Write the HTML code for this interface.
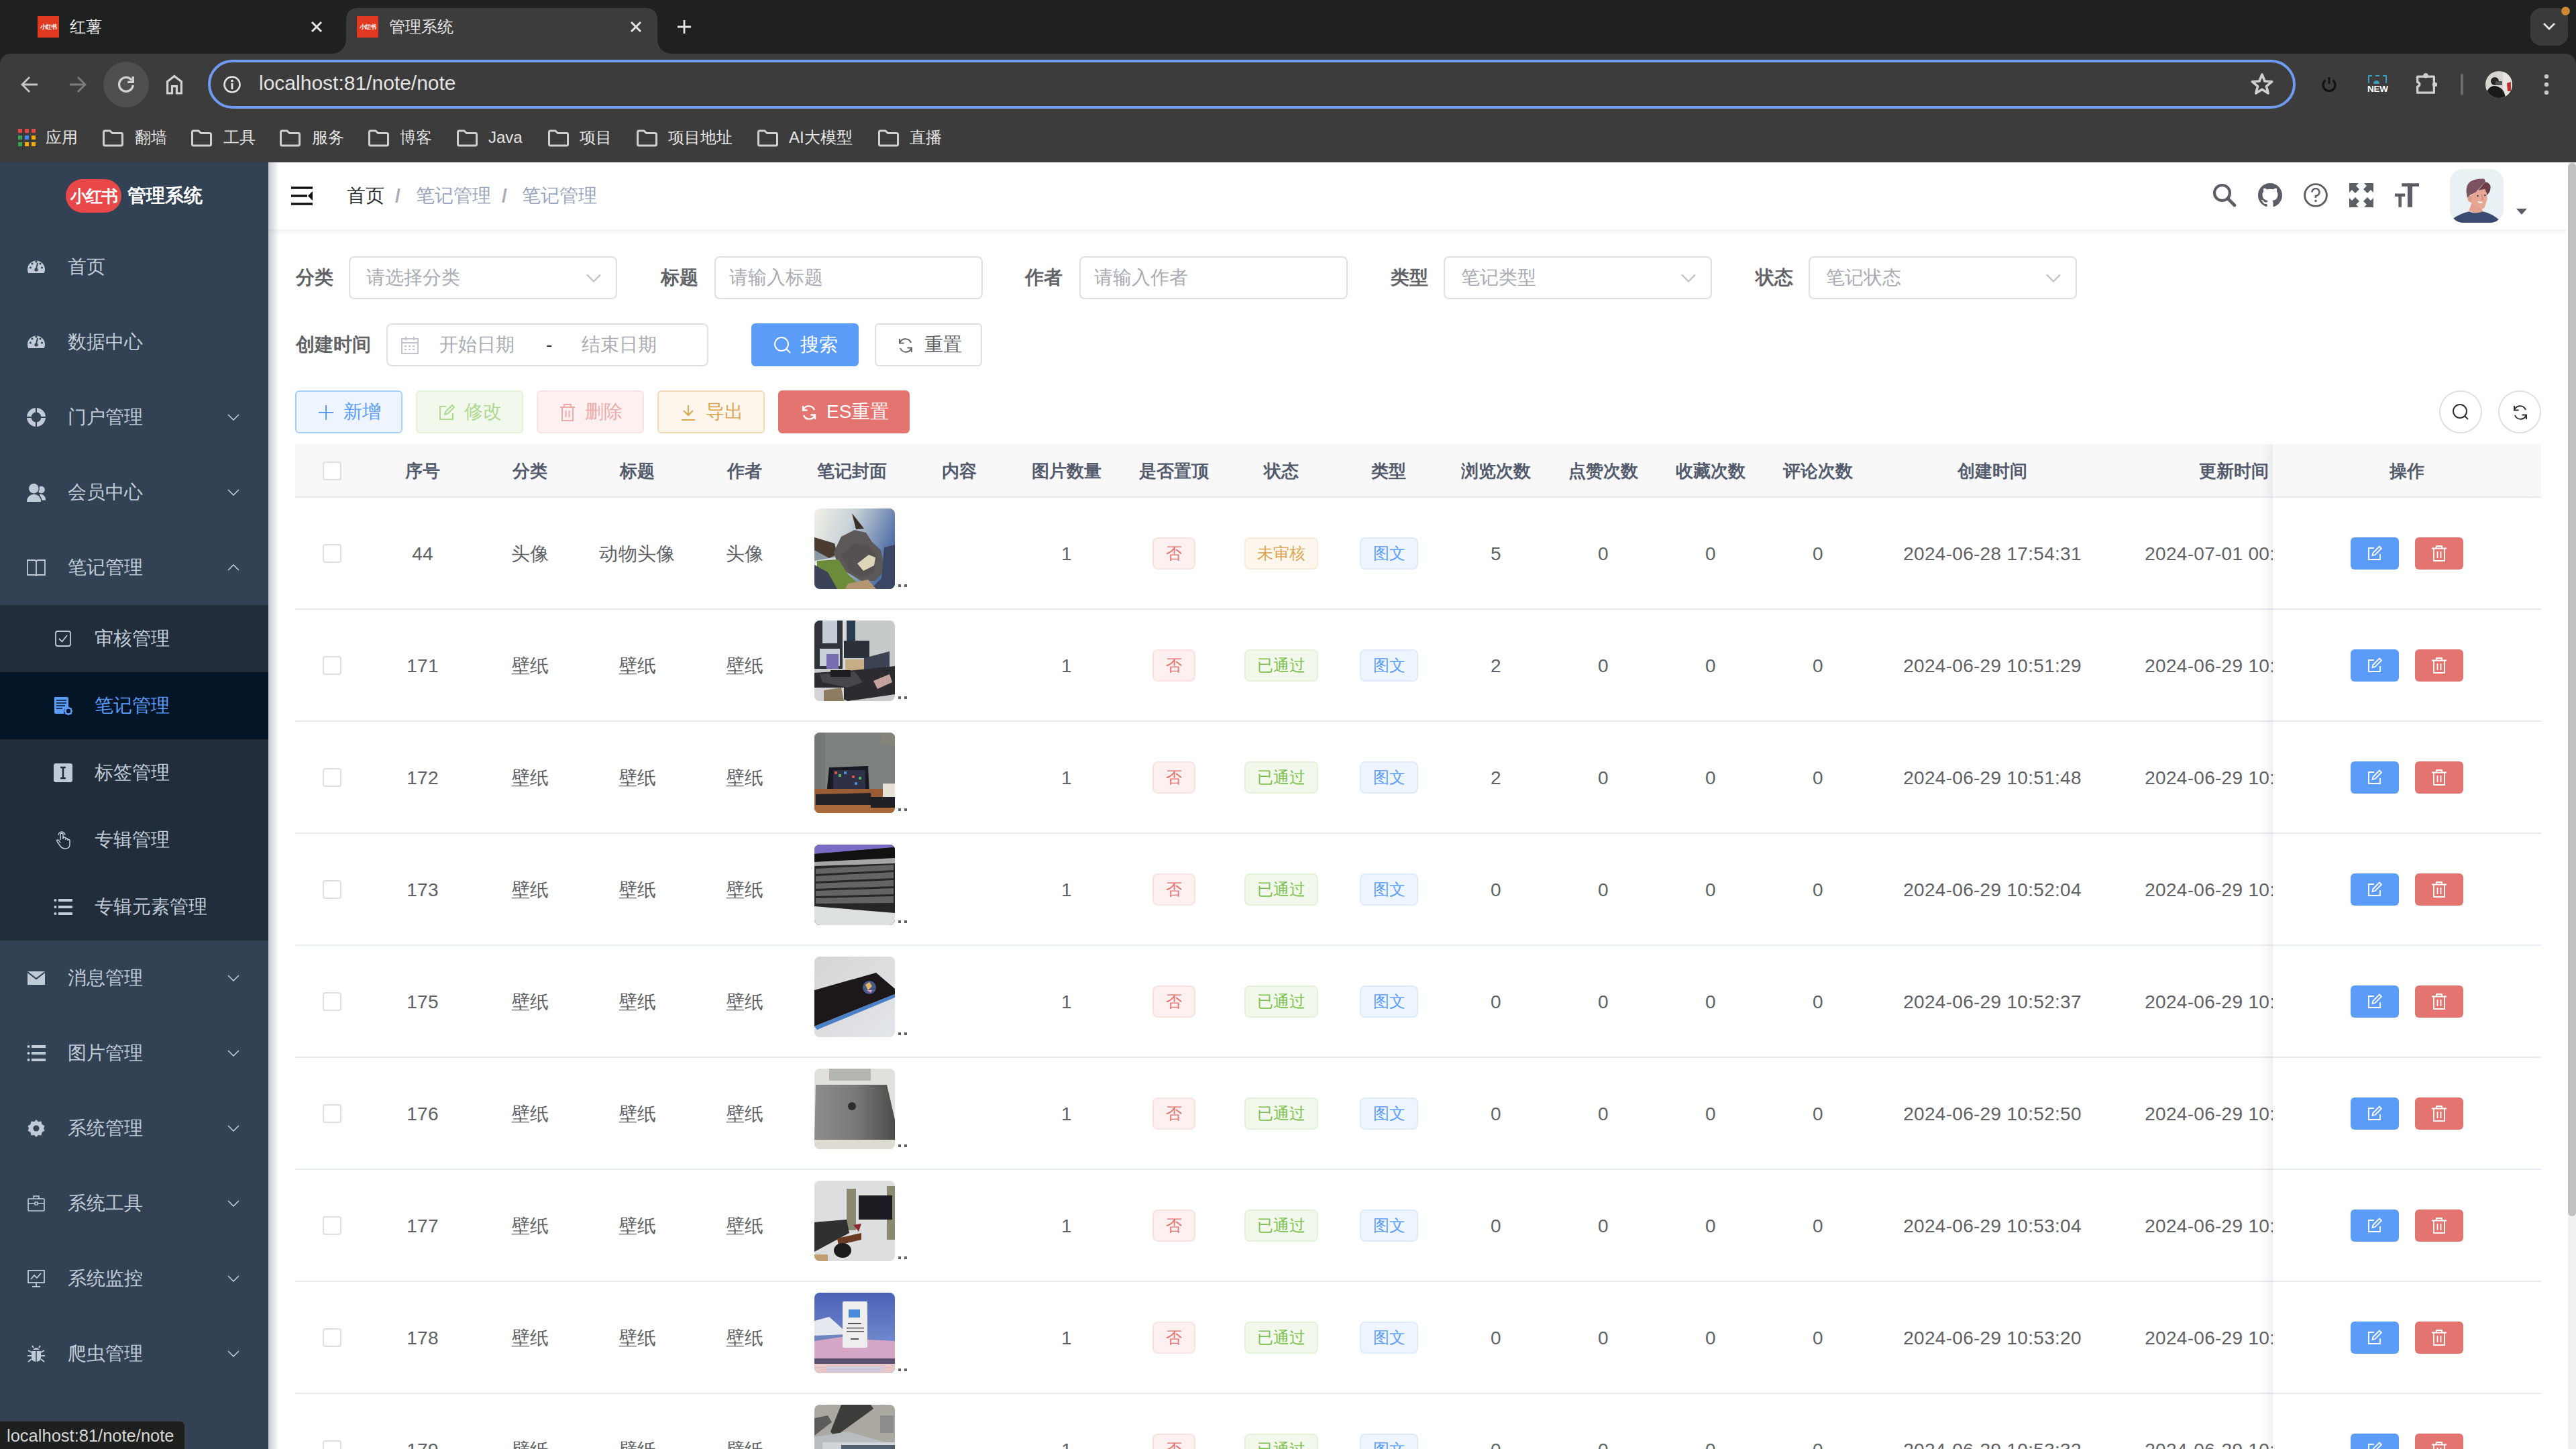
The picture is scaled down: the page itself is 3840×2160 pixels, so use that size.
<!DOCTYPE html>
<html><head><meta charset="utf-8">
<style>
*{box-sizing:border-box;margin:0;padding:0}
html,body{width:3840px;height:2160px;overflow:hidden;background:#fff;font-family:"Liberation Sans",sans-serif}
.a{position:absolute}
svg{display:block}
/* chrome */
#frame{left:0;top:0;width:3840px;height:110px;background:#1f2020}
#toolbar{left:0;top:80px;width:3840px;height:162px;background:#3c3c3c;border-radius:15px 16px 0 0}
.tabtitle{color:#e3e3e3;font-size:24px;line-height:32px;white-space:nowrap}
.bm{color:#e3e3e3;font-size:24px;line-height:32px;white-space:nowrap;top:189px}
/* sidebar */
#side{left:0;top:242px;width:400px;height:1918px;background:#334154;overflow:hidden}
.mi{left:0;width:400px;height:112px}
.mi .t{position:absolute;left:101px;top:0;line-height:112px;font-size:28px;color:#c1cbd8;white-space:nowrap}
.mi .ic{position:absolute;left:40px;top:42px;width:28px;height:28px}
.mi .ar{position:absolute;left:339px;top:51px;width:18px;height:10px}
.si{left:0;width:400px;height:100px;background:#222d3c}
.si .t{position:absolute;left:141px;top:0;line-height:100px;font-size:28px;color:#c1cbd8;white-space:nowrap}
.si .ic{position:absolute;left:80px;top:36px;width:28px;height:28px}

.lbl{font-size:28px;font-weight:bold;color:#606266;line-height:64px;white-space:nowrap}
.inp{height:64px;border:2px solid #dddfe5;border-radius:8px;background:#fff}
.ph{font-size:28px;color:#a9acb3;line-height:60px;white-space:nowrap;position:absolute;left:24px;top:0}
.btn{height:64px;border:2px solid;border-radius:6px;font-size:28px;line-height:60px;white-space:nowrap}
.btn svg{position:absolute}
.btn span{position:absolute;top:0}

.th{position:absolute;top:0;height:80px;line-height:80px;text-align:center;font-size:26px;font-weight:bold;color:#535a6c;white-space:nowrap}
.td{position:absolute;text-align:center;font-size:28px;color:#606266;white-space:nowrap;overflow:hidden;letter-spacing:0.3px}
.cb{position:absolute;width:28px;height:28px;border:2px solid #dddfe5;border-radius:4px;background:#fff}
.tag{position:absolute;height:48px;line-height:44px;border:2px solid;border-radius:8px;font-size:24px;text-align:center;white-space:nowrap}
.rline{position:absolute;left:0;height:2px;background:#e7eaf1}
.ell{position:absolute;font-size:28px;color:#606266;line-height:20px}
@media (max-width:2500px){html{zoom:0.5}}
</style></head>
<body>
<!-- ============ CHROME ============ -->
<div id="frame" class="a"></div>
<div id="toolbar" class="a"></div>

<!-- tab 1 inactive -->
<div class="a" style="left:56px;top:24px;width:32px;height:32px;background:#e0391f;color:#fff;font-size:9px;font-weight:bold;line-height:32px;text-align:center;letter-spacing:-1px;overflow:hidden">小红书</div>
<div class="a tabtitle" style="left:104px;top:24px">红薯</div>
<svg class="a" style="left:463px;top:31px" width="18" height="18" viewBox="0 0 18 18"><path d="M2 2L16 16M16 2L2 16" stroke="#e3e3e3" stroke-width="3"/></svg>
<!-- active tab -->
<svg class="a" style="left:492px;top:12px" width="512" height="68" viewBox="0 0 512 68"><path d="M0 68 Q24 68 24 44 L24 18 Q24 0 42 0 L470 0 Q488 0 488 18 L488 44 Q488 68 512 68 Z" fill="#3c3c3c"/></svg>
<div class="a" style="left:532px;top:24px;width:32px;height:32px;background:#e0391f;color:#fff;font-size:9px;font-weight:bold;line-height:32px;text-align:center;letter-spacing:-1px;overflow:hidden">小红书</div>
<div class="a tabtitle" style="left:580px;top:24px">管理系统</div>
<svg class="a" style="left:939px;top:31px" width="18" height="18" viewBox="0 0 18 18"><path d="M2 2L16 16M16 2L2 16" stroke="#e3e3e3" stroke-width="3"/></svg>
<svg class="a" style="left:1009px;top:29px" width="22" height="22" viewBox="0 0 22 22"><path d="M11 1V21M1 11H21" stroke="#e3e3e3" stroke-width="2.8"/></svg>
<!-- tab search -->
<div class="a" style="left:3772px;top:12px;width:56px;height:56px;border-radius:16px;background:#3a3a3a"></div>
<svg class="a" style="left:3790px;top:33px" width="20" height="12" viewBox="0 0 20 12"><path d="M2 2L10 10L18 2" stroke="#e3e3e3" stroke-width="2.8" fill="none"/></svg>
<div class="a" style="left:3818px;top:10px;width:13px;height:13px;border-radius:50%;background:#cd8a32"></div>

<!-- toolbar icons -->
<svg class="a" style="left:30px;top:112px" width="28" height="28" viewBox="0 0 28 28"><path d="M26 14H4M14 3L3 14L14 25" stroke="#c7c7c7" stroke-width="2.8" fill="none"/></svg>
<svg class="a" style="left:102px;top:112px" width="28" height="28" viewBox="0 0 28 28"><path d="M2 14H24M14 3L25 14L14 25" stroke="#7d7d7d" stroke-width="2.8" fill="none"/></svg>
<div class="a" style="left:154px;top:92px;width:68px;height:68px;border-radius:50%;background:#4f4f4f"></div>
<svg class="a" style="left:170px;top:108px" width="36" height="36" viewBox="0 0 36 36"><path d="M28.3 19A10.4 10.4 0 1 1 26.3 11.6" stroke="#d3d3d3" stroke-width="3.3" fill="none"/><path d="M20.2 14.4H28.25V6" stroke="#d3d3d3" stroke-width="3.3" fill="none"/></svg>
<svg class="a" style="left:240px;top:108px" width="40" height="36" viewBox="0 0 40 36"><path d="M9.6 31V13.5L19.8 5.5L30.4 13.5V31H23.4V20.6H16.5V31Z" stroke="#d3d3d3" stroke-width="3.2" fill="none" stroke-linejoin="miter"/></svg>
<!-- omnibox -->
<div class="a" style="left:310px;top:89px;width:3112px;height:73px;border:4px solid #6f9cf2;border-radius:37px;background:#3c3c3c"></div>
<svg class="a" style="left:332px;top:112px" width="28" height="28" viewBox="0 0 28 28"><circle cx="14" cy="14" r="11.5" stroke="#e3e3e3" stroke-width="2.6" fill="none"/><circle cx="14" cy="8.5" r="1.9" fill="#e3e3e3"/><path d="M14 12V21" stroke="#e3e3e3" stroke-width="3"/></svg>
<div class="a" style="left:386px;top:105px;font-size:30px;line-height:38px;color:#e3e3e3;white-space:nowrap">localhost:81/note/note</div>
<svg class="a" style="left:3350px;top:103px" width="44" height="44" viewBox="0 0 44 44"><path d="M22.00 8.00L26.00 18.00L36.74 18.71L28.47 25.60L31.11 36.04L22.00 30.30L12.89 36.04L15.53 25.60L7.26 18.71L18.00 18.00Z" stroke="#d0d0d0" stroke-width="3.6" fill="none" stroke-linejoin="round"/></svg>
<!-- extension icons -->
<svg class="a" style="left:3459px;top:113px" width="26" height="26" viewBox="0 0 26 26"><path d="M7.5 6.5A9 9 0 1 0 18.5 6.5" stroke="#111" stroke-width="3" fill="none"/><path d="M13 2V12" stroke="#111" stroke-width="3"/></svg>
<div class="a" style="left:3530px;top:112px;width:28px;height:12px;border:2px dashed #3a9bb5;border-bottom:none"></div><div class="a" style="left:3538px;top:120px;width:9px;height:5px;border-radius:5px 5px 0 0;background:#3a9bb5"></div>
<div class="a" style="left:3529px;top:125px;font-size:13.5px;font-weight:bold;color:#fff;line-height:16px;letter-spacing:-0.3px">NEW</div>
<svg class="a" style="left:3598px;top:104px" width="40" height="40" viewBox="0 0 40 40"><path d="M5.65 10.15H30.35V34.15H5.65V25A3.2 3.2 0 0 0 5.65 18.6Z" stroke="#d0d0d0" stroke-width="3.3" fill="none" stroke-linejoin="round"/><circle cx="18" cy="8.6" r="3.6" fill="#d0d0d0"/><circle cx="31.5" cy="22" r="3.6" fill="#d0d0d0"/></svg>
<div class="a" style="left:3668px;top:110px;width:4px;height:32px;background:#6b6b6b;border-radius:2px"></div>
<div class="a" style="left:3705px;top:106px;width:40px;height:40px;border-radius:50%;overflow:hidden;background:#d8d4cf"><svg width="40" height="40" viewBox="0 0 40 40"><rect x="26" y="0" width="14" height="40" fill="#e8e4e0"/><circle cx="14" cy="15" r="6" fill="#222"/><path d="M0 40Q2 22 14 22Q28 24 30 40Z" fill="#1a1a1a"/><rect x="15" y="15" width="10" height="6" fill="#555"/><path d="M32 18L38 16L38 30L33 30Z" fill="#c03030"/></svg></div>
<svg class="a" style="left:3790px;top:110px" width="12" height="32" viewBox="0 0 12 32"><circle cx="6" cy="4" r="3.2" fill="#c7c7c7"/><circle cx="6" cy="16" r="3.2" fill="#c7c7c7"/><circle cx="6" cy="28" r="3.2" fill="#c7c7c7"/></svg>

<!-- bookmarks -->
<svg class="a" style="left:27px;top:192px" width="26" height="26" viewBox="0 0 26 26">
<rect x="0" y="0" width="6" height="6" fill="#e8453c"/><rect x="10" y="0" width="6" height="6" fill="#e8453c"/><rect x="20" y="0" width="6" height="6" fill="#e8453c"/>
<rect x="0" y="10" width="6" height="6" fill="#34a853"/><rect x="10" y="10" width="6" height="6" fill="#4285f4"/><rect x="20" y="10" width="6" height="6" fill="#f9ab00"/>
<rect x="0" y="20" width="6" height="6" fill="#34a853"/><rect x="10" y="20" width="6" height="6" fill="#f9ab00"/><rect x="20" y="20" width="6" height="6" fill="#f9ab00"/></svg>
<div class="a bm" style="left:68px">应用</div>
<svg class="a" style="left:152px;top:193px" width="33" height="26" viewBox="0 0 33 26"><path d="M2.5 4Q2.5 2 4.5 2H12L15.5 5.5H28.5Q30.5 5.5 30.5 7.5V22Q30.5 24 28.5 24H4.5Q2.5 24 2.5 22Z" stroke="#d0d0d0" stroke-width="3" fill="none" stroke-linejoin="round"/></svg>
<div class="a bm" style="left:201px">翻墙</div>
<svg class="a" style="left:284px;top:193px" width="33" height="26" viewBox="0 0 33 26"><path d="M2.5 4Q2.5 2 4.5 2H12L15.5 5.5H28.5Q30.5 5.5 30.5 7.5V22Q30.5 24 28.5 24H4.5Q2.5 24 2.5 22Z" stroke="#d0d0d0" stroke-width="3" fill="none" stroke-linejoin="round"/></svg>
<div class="a bm" style="left:333px">工具</div>
<svg class="a" style="left:416px;top:193px" width="33" height="26" viewBox="0 0 33 26"><path d="M2.5 4Q2.5 2 4.5 2H12L15.5 5.5H28.5Q30.5 5.5 30.5 7.5V22Q30.5 24 28.5 24H4.5Q2.5 24 2.5 22Z" stroke="#d0d0d0" stroke-width="3" fill="none" stroke-linejoin="round"/></svg>
<div class="a bm" style="left:465px">服务</div>
<svg class="a" style="left:548px;top:193px" width="33" height="26" viewBox="0 0 33 26"><path d="M2.5 4Q2.5 2 4.5 2H12L15.5 5.5H28.5Q30.5 5.5 30.5 7.5V22Q30.5 24 28.5 24H4.5Q2.5 24 2.5 22Z" stroke="#d0d0d0" stroke-width="3" fill="none" stroke-linejoin="round"/></svg>
<div class="a bm" style="left:596px">博客</div>
<svg class="a" style="left:680px;top:193px" width="33" height="26" viewBox="0 0 33 26"><path d="M2.5 4Q2.5 2 4.5 2H12L15.5 5.5H28.5Q30.5 5.5 30.5 7.5V22Q30.5 24 28.5 24H4.5Q2.5 24 2.5 22Z" stroke="#d0d0d0" stroke-width="3" fill="none" stroke-linejoin="round"/></svg>
<div class="a bm" style="left:728px">Java</div>
<svg class="a" style="left:816px;top:193px" width="33" height="26" viewBox="0 0 33 26"><path d="M2.5 4Q2.5 2 4.5 2H12L15.5 5.5H28.5Q30.5 5.5 30.5 7.5V22Q30.5 24 28.5 24H4.5Q2.5 24 2.5 22Z" stroke="#d0d0d0" stroke-width="3" fill="none" stroke-linejoin="round"/></svg>
<div class="a bm" style="left:864px">项目</div>
<svg class="a" style="left:948px;top:193px" width="33" height="26" viewBox="0 0 33 26"><path d="M2.5 4Q2.5 2 4.5 2H12L15.5 5.5H28.5Q30.5 5.5 30.5 7.5V22Q30.5 24 28.5 24H4.5Q2.5 24 2.5 22Z" stroke="#d0d0d0" stroke-width="3" fill="none" stroke-linejoin="round"/></svg>
<div class="a bm" style="left:996px">项目地址</div>
<svg class="a" style="left:1128px;top:193px" width="33" height="26" viewBox="0 0 33 26"><path d="M2.5 4Q2.5 2 4.5 2H12L15.5 5.5H28.5Q30.5 5.5 30.5 7.5V22Q30.5 24 28.5 24H4.5Q2.5 24 2.5 22Z" stroke="#d0d0d0" stroke-width="3" fill="none" stroke-linejoin="round"/></svg>
<div class="a bm" style="left:1176px">AI大模型</div>
<svg class="a" style="left:1308px;top:193px" width="33" height="26" viewBox="0 0 33 26"><path d="M2.5 4Q2.5 2 4.5 2H12L15.5 5.5H28.5Q30.5 5.5 30.5 7.5V22Q30.5 24 28.5 24H4.5Q2.5 24 2.5 22Z" stroke="#d0d0d0" stroke-width="3" fill="none" stroke-linejoin="round"/></svg>
<div class="a bm" style="left:1356px">直播</div>

<!-- ============ SIDEBAR ============ -->
<div id="side" class="a">
<div class="a" style="left:98px;top:25px;width:83px;height:50px;border-radius:25px;background:#e8484a;color:#fff;font-weight:bold;font-size:25px;line-height:50px;text-align:center;letter-spacing:-2px;overflow:hidden">小红书</div>
<div class="a" style="left:190px;top:0;line-height:100px;font-size:28px;font-weight:bold;color:#fff;white-space:nowrap">管理系统</div>
<div class="a mi" style="top:100px"><svg class="ic" viewBox="0 0 28 28"><path d="M2.2 23A13 13 0 1 1 25.8 23Z" fill="#c1cbd8"/><circle cx="5.5" cy="15" r="1.6" fill="#334154"/><circle cx="8" cy="9" r="1.6" fill="#334154"/><circle cx="14" cy="6" r="1.6" fill="#334154"/><circle cx="20" cy="9" r="1.6" fill="#334154"/><circle cx="22.5" cy="15" r="1.6" fill="#334154"/><path d="M16 8L14 17" stroke="#334154" stroke-width="2"/><circle cx="14" cy="18" r="2.6" fill="#334154"/></svg><div class="t">首页</div></div>
<div class="a mi" style="top:212px"><svg class="ic" viewBox="0 0 28 28"><path d="M2.2 23A13 13 0 1 1 25.8 23Z" fill="#c1cbd8"/><circle cx="5.5" cy="15" r="1.6" fill="#334154"/><circle cx="8" cy="9" r="1.6" fill="#334154"/><circle cx="14" cy="6" r="1.6" fill="#334154"/><circle cx="20" cy="9" r="1.6" fill="#334154"/><circle cx="22.5" cy="15" r="1.6" fill="#334154"/><path d="M16 8L14 17" stroke="#334154" stroke-width="2"/><circle cx="14" cy="18" r="2.6" fill="#334154"/></svg><div class="t">数据中心</div></div>
<div class="a mi" style="top:324px"><svg class="ic" viewBox="0 0 28 28"><circle cx="14" cy="14" r="10.7" stroke="#c1cbd8" stroke-width="6.6" fill="none"/><path d="M14 0V8M14 20V28M0 14H8M20 14H28" stroke="#334154" stroke-width="2"/></svg><div class="t">门户管理</div><svg class="ar" viewBox="0 0 18 10"><path d="M1 1L9 9L17 1" stroke="#c1cbd8" stroke-width="1.6" fill="none"/></svg></div>
<div class="a mi" style="top:436px"><svg class="ic" viewBox="0 0 28 28"><circle cx="21.5" cy="10" r="5.3" fill="#c1cbd8"/><path d="M19 16.5Q28 17 28.2 25.8H21Z" fill="#c1cbd8"/><circle cx="10.3" cy="8.1" r="8.6" fill="#334154"/><path d="M-1.5 28Q-1.5 16.5 10.5 15Q22.5 16.5 22.5 28Z" fill="#334154"/><circle cx="10.3" cy="8.1" r="7.3" fill="#c1cbd8"/><path d="M0 28Q0 18 10.5 16.5Q21 18 21 28Z" fill="#c1cbd8"/></svg><div class="t">会员中心</div><svg class="ar" viewBox="0 0 18 10"><path d="M1 1L9 9L17 1" stroke="#c1cbd8" stroke-width="1.6" fill="none"/></svg></div>
<div class="a mi" style="top:548px"><svg class="ic" viewBox="0 0 28 28"><path d="M1 3H11Q14 3 14 6Q14 3 17 3H27V25H17Q14 25 14 27Q14 25 11 25H1Z M14 6V26" stroke="#c1cbd8" stroke-width="1.8" fill="none"/></svg><div class="t">笔记管理</div><svg class="ar" viewBox="0 0 18 10"><path d="M1 9L9 1L17 9" stroke="#c1cbd8" stroke-width="1.6" fill="none"/></svg></div>
<div class="a si" style="top:660px;"><svg class="ic" viewBox="0 0 28 28"><rect x="3" y="3" width="22" height="22" rx="3" stroke="#c1cbd8" stroke-width="1.8" fill="none"/><path d="M8 14L12.5 18.5L20 9" stroke="#c1cbd8" stroke-width="1.8" fill="none"/></svg><div class="t" >审核管理</div></div>
<div class="a si" style="top:760px;background:#041527"><svg class="ic" viewBox="0 0 28 28"><path d="M1 2Q1 1 2 1H20Q22 1 22 3V17A6 6 0 0 0 16 26H3Q1 26 1 24Z" fill="#5a9cf8"/><path d="M4 6H19M4 10H19M4 14H17M4 18H13" stroke="#041527" stroke-width="1.6"/><circle cx="22" cy="22" r="4.5" stroke="#5a9cf8" stroke-width="2.5" fill="none"/><path d="M22 15.5V17M22 27V28.5M15.5 22H17M27 22H28.5M17.5 17.5L18.5 18.5M25.5 25.5L26.5 26.5M17.5 26.5L18.5 25.5M25.5 18.5L26.5 17.5" stroke="#5a9cf8" stroke-width="2"/></svg><div class="t" style="color:#5a9cf8">笔记管理</div></div>
<div class="a si" style="top:860px;"><svg class="ic" viewBox="0 0 28 28"><rect x="0" y="0" width="28" height="28" rx="3" fill="#c1cbd8"/><path d="M10 6H18M14 6V22M10 22H18" stroke="#222d3c" stroke-width="2.6"/></svg><div class="t" >标签管理</div></div>
<div class="a si" style="top:960px;"><svg class="ic" viewBox="0 0 28 28"><path d="M10 14V6Q10 4 12 4Q14 4 14 6V13M14 12Q14 10 16 10Q18 10 18 12V14M18 13Q18 11.5 19.5 11.5Q21 11.5 21 13V15M21 15Q21 13.5 22.5 13.5Q24 13.5 24 15V21Q24 27 17 27Q12 27 9 22L5 16Q4 14 6 14Q7.5 14 10 18" stroke="#c1cbd8" stroke-width="1.5" fill="none"/><path d="M7 7A5 5 0 0 1 17 7" stroke="#c1cbd8" stroke-width="1.3" fill="none"/></svg><div class="t" >专辑管理</div></div>
<div class="a si" style="top:1060px;"><svg class="ic" viewBox="0 0 28 28"><circle cx="2.5" cy="4" r="2" fill="#c1cbd8"/><circle cx="2.5" cy="14" r="2" fill="#c1cbd8"/><circle cx="2.5" cy="24" r="2" fill="#c1cbd8"/><rect x="7" y="2" width="21" height="4" fill="#c1cbd8"/><rect x="7" y="12" width="21" height="4" fill="#c1cbd8"/><rect x="7" y="22" width="21" height="4" fill="#c1cbd8"/></svg><div class="t" >专辑元素管理</div></div>
<div class="a mi" style="top:1160px"><svg class="ic" viewBox="0 0 28 28"><path d="M1 4H27V24H1Z" fill="#c1cbd8"/><path d="M1 5L14 15L27 5" stroke="#334154" stroke-width="2.2" fill="none"/></svg><div class="t">消息管理</div><svg class="ar" viewBox="0 0 18 10"><path d="M1 1L9 9L17 1" stroke="#c1cbd8" stroke-width="1.6" fill="none"/></svg></div>
<div class="a mi" style="top:1272px"><svg class="ic" viewBox="0 0 28 28"><circle cx="2.5" cy="4" r="2" fill="#c1cbd8"/><circle cx="2.5" cy="14" r="2" fill="#c1cbd8"/><circle cx="2.5" cy="24" r="2" fill="#c1cbd8"/><rect x="7" y="2" width="21" height="4" fill="#c1cbd8"/><rect x="7" y="12" width="21" height="4" fill="#c1cbd8"/><rect x="7" y="22" width="21" height="4" fill="#c1cbd8"/></svg><div class="t">图片管理</div><svg class="ar" viewBox="0 0 18 10"><path d="M1 1L9 9L17 1" stroke="#c1cbd8" stroke-width="1.6" fill="none"/></svg></div>
<div class="a mi" style="top:1384px"><svg class="ic" viewBox="0 0 28 28"><path d="M14 1L17 4L21.5 3.5L22.5 8L26.5 10.5L25 14L26.5 17.5L22.5 20L21.5 24.5L17 24L14 27L11 24L6.5 24.5L5.5 20L1.5 17.5L3 14L1.5 10.5L5.5 8L6.5 3.5L11 4Z" fill="#c1cbd8"/><circle cx="14" cy="14" r="4.5" fill="#334154"/></svg><div class="t">系统管理</div><svg class="ar" viewBox="0 0 18 10"><path d="M1 1L9 9L17 1" stroke="#c1cbd8" stroke-width="1.6" fill="none"/></svg></div>
<div class="a mi" style="top:1496px"><svg class="ic" viewBox="0 0 28 28"><rect x="2" y="7" width="24" height="18" rx="1.5" stroke="#c1cbd8" stroke-width="1.6" fill="none"/><path d="M10 7V3H18V7M2 14H26" stroke="#c1cbd8" stroke-width="1.6" fill="none"/><rect x="12" y="12" width="4" height="4" stroke="#c1cbd8" stroke-width="1.4" fill="#334154"/></svg><div class="t">系统工具</div><svg class="ar" viewBox="0 0 18 10"><path d="M1 1L9 9L17 1" stroke="#c1cbd8" stroke-width="1.6" fill="none"/></svg></div>
<div class="a mi" style="top:1608px"><svg class="ic" viewBox="0 0 28 28"><rect x="2" y="2" width="24" height="18" stroke="#c1cbd8" stroke-width="1.8" fill="none"/><path d="M6 15L11 9L15 13L21 6M14 20V25M8 26H20" stroke="#c1cbd8" stroke-width="1.8" fill="none"/></svg><div class="t">系统监控</div><svg class="ar" viewBox="0 0 18 10"><path d="M1 1L9 9L17 1" stroke="#c1cbd8" stroke-width="1.6" fill="none"/></svg></div>
<div class="a mi" style="top:1720px"><svg class="ic" viewBox="0 0 28 28"><path d="M9 8Q14 2 19 8Z" fill="#c1cbd8"/><path d="M7 10H21V19Q21 26 14 26Q7 26 7 19Z" fill="#c1cbd8"/><path d="M14 10V26" stroke="#334154" stroke-width="1.5"/><path d="M7 12L2 9M21 12L26 9M7 17H1M21 17H27M7 22L2 26M21 22L26 26M10 5L8 2M18 5L20 2" stroke="#c1cbd8" stroke-width="2"/></svg><div class="t">爬虫管理</div><svg class="ar" viewBox="0 0 18 10"><path d="M1 1L9 9L17 1" stroke="#c1cbd8" stroke-width="1.6" fill="none"/></svg></div>
</div>

<!-- ============ MAIN ============ -->
<div id="main" class="a" style="left:400px;top:242px;width:3428px;height:1918px;background:#fff;overflow:hidden">
<!-- navbar -->
<div class="a" style="left:0;top:0;width:3428px;height:100px;background:#fff;box-shadow:0 2px 8px rgba(0,21,41,.08)"></div>
<svg class="a" style="left:34px;top:35px" width="32" height="30" viewBox="0 0 32 30"><path d="M0 3H32M0 15H24M0 27H32" stroke="#111" stroke-width="3.6"/><path d="M32 8V22L25 15Z" fill="#111"/></svg>
<div class="a" style="left:117px;top:0;line-height:100px;font-size:28px;color:#303133;white-space:nowrap">首页</div>
<div class="a" style="left:189px;top:0;line-height:100px;font-size:28px;color:#a9acb3;font-weight:bold">/</div>
<div class="a" style="left:220px;top:0;line-height:100px;font-size:28px;color:#9aa7bc;white-space:nowrap">笔记管理</div>
<div class="a" style="left:348px;top:0;line-height:100px;font-size:28px;color:#a9acb3;font-weight:bold">/</div>
<div class="a" style="left:378px;top:0;line-height:100px;font-size:28px;color:#9aa7bc;white-space:nowrap">笔记管理</div>
<!-- navbar right icons -->
<svg class="a" style="left:2898px;top:31px" width="36" height="36" viewBox="0 0 36 36"><circle cx="14.5" cy="14.5" r="11.5" stroke="#5b5e65" stroke-width="4.2" fill="none"/><path d="M23 23L33 33" stroke="#5b5e65" stroke-width="4.6" stroke-linecap="round"/></svg>
<svg class="a" style="left:2966px;top:31px" width="36" height="36" viewBox="0 0 16 16"><path fill="#5b5e65" d="M8 0C3.58 0 0 3.58 0 8c0 3.54 2.29 6.53 5.47 7.59.4.07.55-.17.55-.38 0-.19-.01-.82-.01-1.49-2.01.37-2.53-.49-2.69-.94-.09-.23-.48-.94-.82-1.13-.28-.15-.68-.52-.01-.53.63-.01 1.08.58 1.23.82.72 1.21 1.87.87 2.33.66.07-.52.28-.87.51-1.07-1.78-.2-3.64-.89-3.64-3.95 0-.87.31-1.590.82-2.15-.08-.2-.36-1.02.08-2.12 0 0 .67-.21 2.2.82.64-.18 1.32-.27 2-.27.68 0 1.36.09 2 .27 1.53-1.04 2.2-.82 2.2-.82.44 1.1.16 1.92.08 2.12.51.56.82 1.27.82 2.15 0 3.07-1.87 3.75-3.65 3.95.29.25.54.73.54 1.48 0 1.07-.01 1.93-.01 2.2 0 .21.15.46.55.38A8.013 8.013 0 0016 8c0-4.42-3.58-8-8-8z"/></svg>
<svg class="a" style="left:3034px;top:31px" width="36" height="36" viewBox="0 0 36 36"><circle cx="18" cy="18" r="16.4" stroke="#5b5e65" stroke-width="2.9" fill="none"/><path d="M12.5 13.5A5.5 5.5 0 1 1 18 19V22" stroke="#5b5e65" stroke-width="2.6" fill="none"/><circle cx="18" cy="26.5" r="1.8" fill="#5b5e65"/></svg>
<svg class="a" style="left:3102px;top:31px" width="36" height="36" viewBox="0 0 36 36"><path d="M0 0H14L10 4L15 9L9 15L4 10L0 14Z M36 0V14L32 10L27 15L21 9L26 4L22 0Z M0 36V22L4 26L9 21L15 27L10 32L14 36Z M36 36H22L26 32L21 27L27 21L32 26L36 22Z" fill="#5b5e65"/></svg>
<svg class="a" style="left:3170px;top:31px" width="36" height="36" viewBox="0 0 36 36"><path d="M10.3 0.2H36V5.1H26.1V35.8H18.9V5.1H10.3Z M0 15.4H15.2V20H9.9V35.8H5.4V20H0Z" fill="#5b5e65"/></svg>
<!-- avatar -->
<div class="a" style="left:3252px;top:10px;width:80px;height:80px;border-radius:20px;background:#e9f1f4;overflow:hidden"><svg width="80" height="80" viewBox="0 0 80 80">
<path d="M28.4 62.5L32.3 50.7L47.4 58.6L49 63.2Q40 68 28.4 62.5Z" fill="#e3a28e"/>
<path d="M5.4 73.3Q16 66 28.4 63.2Q38 68 49 63.2Q62 66 72.7 75L68 80H10Z" fill="#3a4a72"/>
<path d="M32.3 50.7L47.7 59.9L51.3 57.9L55.9 44.1L54.6 35.6L52 29.7L38.9 33L31.7 38.9L27.1 42.8L29.7 48.7Z" fill="#e8a795"/>
<ellipse cx="29.7" cy="44.1" rx="3.2" ry="4.6" fill="#df9a82"/>
<path d="M24.5 34Q24 24 30 19Q38 14 50.7 14.6Q53 16 52.7 19.2L38.9 34.3L29.7 38.9L25.8 42.8Z" fill="#7d5260"/>
<path d="M52.7 19.2Q58 19.5 60.5 25Q61 31 58.6 34.9L55.3 38.9L54.6 35.6L52 29.7L42 32Z" fill="#6b3d47"/>
<circle cx="41.5" cy="39.9" r="1.1" fill="#1e2040"/><circle cx="52.3" cy="39.2" r="1.1" fill="#1e2040"/>
<path d="M41.8 48.6Q45 51.5 48.4 49.3Q45 50 41.8 48.6Z" stroke="#fff" stroke-width="1.4" fill="#fff"/>
<path d="M47 37L49 45L47 46" stroke="#a06a60" stroke-width=".6" fill="none"/>
</svg></div>
<svg class="a" style="left:3351px;top:69px" width="16" height="10" viewBox="0 0 16 10"><path d="M0 0H16L8 9Z" fill="#5b5e65"/></svg>
<div class="a lbl" style="left:41px;top:140px">分类</div>
<div class="a inp" style="left:120px;top:140px;width:400px"><div class="ph">请选择分类</div><svg class="a" style="left:352px;top:24px" width="22" height="14" viewBox="0 0 22 14"><path d="M1 1.5L11 11.5L21 1.5" stroke="#c1c4cb" stroke-width="2.4" fill="none"/></svg></div>
<div class="a lbl" style="left:585px;top:140px">标题</div>
<div class="a inp" style="left:665px;top:140px;width:400px"><div class="ph" style="left:20px">请输入标题</div></div>
<div class="a lbl" style="left:1128px;top:140px">作者</div>
<div class="a inp" style="left:1209px;top:140px;width:400px"><div class="ph" style="left:20px">请输入作者</div></div>
<div class="a lbl" style="left:1673px;top:140px">类型</div>
<div class="a inp" style="left:1752px;top:140px;width:400px"><div class="ph">笔记类型</div><svg class="a" style="left:352px;top:24px" width="22" height="14" viewBox="0 0 22 14"><path d="M1 1.5L11 11.5L21 1.5" stroke="#c1c4cb" stroke-width="2.4" fill="none"/></svg></div>
<div class="a lbl" style="left:2217px;top:140px">状态</div>
<div class="a inp" style="left:2296px;top:140px;width:400px"><div class="ph">笔记状态</div><svg class="a" style="left:352px;top:24px" width="22" height="14" viewBox="0 0 22 14"><path d="M1 1.5L11 11.5L21 1.5" stroke="#c1c4cb" stroke-width="2.4" fill="none"/></svg></div>
<div class="a lbl" style="left:41px;top:240px">创建时间</div>
<div class="a inp" style="left:176px;top:240px;width:480px">
<svg class="a" style="left:20px;top:18px" width="26" height="26" viewBox="0 0 26 26"><rect x="1" y="3" width="24" height="22" stroke="#c1c4cb" stroke-width="2" fill="none"/><path d="M1 9H25M7 0V5M19 0V5" stroke="#c1c4cb" stroke-width="2"/><path d="M5 14H8M11 14H14M17 14H20M5 19H8M11 19H14M17 19H20" stroke="#c1c4cb" stroke-width="1.8"/></svg>
<div class="ph" style="left:77px">开始日期</div><div class="ph" style="left:236px;color:#303133">-</div><div class="ph" style="left:289px">结束日期</div></div>
<div class="a btn" style="left:720px;top:240px;width:160px;background:#5a9cf8;border-color:#5a9cf8;color:#fff">
<svg style="left:31px;top:17px" width="28" height="28" viewBox="0 0 28 28"><circle cx="12" cy="12" r="10" stroke="#fff" stroke-width="2" fill="none"/><path d="M19.5 19.5L25 25" stroke="#fff" stroke-width="2"/></svg><span style="left:71px;font-weight:500">搜索</span></div>
<div class="a btn" style="left:904px;top:240px;width:160px;background:#fff;border-color:#dddfe5;color:#606266">
<svg style="left:31px;top:18px" width="26" height="26" viewBox="0 0 26 26"><path d="M21 9A9 9 0 0 0 4.5 8.5M5 17A9 9 0 0 0 21.5 17.5" stroke="#606266" stroke-width="2" fill="none"/><path d="M4 3V9.5H10.5M22 23V16.5H15.5" stroke="#606266" stroke-width="2" fill="none"/></svg><span style="left:72px">重置</span></div>
<div class="a btn" style="left:40px;top:340px;width:160px;background:#eef5fe;border-color:#aacefb;color:#5a9cf8">
<svg style="left:31px;top:18px" width="26" height="26" viewBox="0 0 26 26"><path d="M13 2V24M2 13H24" stroke="#5a9cf8" stroke-width="2"/></svg><span style="left:70px">新增</span></div>
<div class="a btn" style="left:220px;top:340px;width:160px;background:#f2f9ec;border-color:#e4f2da;color:#afd891">
<svg style="left:31px;top:18px" width="26" height="26" viewBox="0 0 26 26"><path d="M12 4H3V23H22V14" stroke="#afd891" stroke-width="2" fill="none"/><path d="M10 16L11 12L21 2L24 5L14 15Z" stroke="#afd891" stroke-width="2" fill="none"/></svg><span style="left:70px">修改</span></div>
<div class="a btn" style="left:400px;top:340px;width:160px;background:#fcf0f0;border-color:#f9e3e2;color:#edaba9">
<svg style="left:31px;top:17px" width="26" height="28" viewBox="0 0 26 28"><path d="M2 6H24M8 6V2H18V6M5 6V26H21V6M10.5 11V21M15.5 11V21" stroke="#edaba9" stroke-width="2" fill="none"/></svg><span style="left:70px">删除</span></div>
<div class="a btn" style="left:580px;top:340px;width:160px;background:#fcf6ed;border-color:#f1dbb6;color:#dca550">
<svg style="left:31px;top:18px" width="26" height="26" viewBox="0 0 26 26"><path d="M13 2V17M6 10L13 17L20 10M3 24H23" stroke="#dca550" stroke-width="2" fill="none"/></svg><span style="left:70px">导出</span></div>
<div class="a btn" style="left:760px;top:340px;width:196px;background:#e47470;border-color:#e47470;color:#fff">
<svg style="left:31px;top:18px" width="26" height="26" viewBox="0 0 26 26"><path d="M21 9A9 9 0 0 0 4.5 8.5M5 17A9 9 0 0 0 21.5 17.5" stroke="#fff" stroke-width="2.4" fill="none"/><path d="M4 3V9.5H10.5M22 23V16.5H15.5" stroke="#fff" stroke-width="2.4" fill="none"/></svg><span style="left:70px">ES重置</span></div>
<div class="a" style="left:3236px;top:340px;width:64px;height:64px;border:2px solid #dddfe5;border-radius:50%;background:#fff"><svg class="a" style="left:17px;top:17px" width="28" height="28" viewBox="0 0 28 28"><circle cx="12" cy="12" r="10" stroke="#303133" stroke-width="2" fill="none"/><path d="M19 19L24 24" stroke="#303133" stroke-width="2"/></svg></div>
<div class="a" style="left:3324px;top:340px;width:64px;height:64px;border:2px solid #dddfe5;border-radius:50%;background:#fff"><svg class="a" style="left:18px;top:18px" width="26" height="26" viewBox="0 0 26 26"><path d="M21 9A9 9 0 0 0 4.5 8.5M5 17A9 9 0 0 0 21.5 17.5" stroke="#303133" stroke-width="2" fill="none"/><path d="M4 3V9.5H10.5M22 23V16.5H15.5" stroke="#303133" stroke-width="2" fill="none"/></svg></div>
<div class="a" style="left:40px;top:420px;width:3348px;height:1498px;overflow:hidden">
<div class="a" style="left:0;top:0;width:3348px;height:80px;background:#f8f8f9"></div>
<div class="rline" style="top:78px;width:3348px"></div>
<div class="cb" style="left:41px;top:26px"></div>
<div class="th" style="left:110px;width:160px">序号</div>
<div class="th" style="left:270px;width:160px">分类</div>
<div class="th" style="left:430px;width:160px">标题</div>
<div class="th" style="left:590px;width:160px">作者</div>
<div class="th" style="left:750px;width:160px">笔记封面</div>
<div class="th" style="left:910px;width:160px">内容</div>
<div class="th" style="left:1070px;width:160px">图片数量</div>
<div class="th" style="left:1230px;width:160px">是否置顶</div>
<div class="th" style="left:1390px;width:160px">状态</div>
<div class="th" style="left:1550px;width:160px">类型</div>
<div class="th" style="left:1710px;width:160px">浏览次数</div>
<div class="th" style="left:1870px;width:160px">点赞次数</div>
<div class="th" style="left:2030px;width:160px">收藏次数</div>
<div class="th" style="left:2190px;width:160px">评论次数</div>
<div class="th" style="left:2350px;width:360px">创建时间</div>
<div class="th" style="left:2710px;width:360px">更新时间</div>
<div class="rline" style="top:245px;width:3348px"></div>
<div class="cb" style="left:41px;top:149px"></div>
<div class="td" style="left:110px;width:160px;top:80px;height:167px;line-height:167px">44</div>
<div class="td" style="left:270px;width:160px;top:80px;height:167px;line-height:167px">头像</div>
<div class="td" style="left:430px;width:160px;top:80px;height:167px;line-height:167px">动物头像</div>
<div class="td" style="left:590px;width:160px;top:80px;height:167px;line-height:167px">头像</div>
<div class="a" style="left:774px;top:96px;width:120px;height:120px;border-radius:8px;overflow:hidden"><svg width="120" height="120" viewBox="0 0 120 120"><defs><linearGradient id="g1" x1="0" y1="0" x2="1" y2="0.4"><stop offset="0" stop-color="#f2f1e6"/><stop offset="0.45" stop-color="#c8d2d8"/><stop offset="1" stop-color="#4f6ea6"/></linearGradient></defs>
<rect width="120" height="120" fill="url(#g1)"/>
<path d="M0 60L12 54L30 56L34 72L0 78Z" fill="#8a98a2"/>
<path d="M0 43L30 52L34 68L22 74L0 62Z" fill="#4b3c32"/>
<path d="M56 7L62 31L74 30Z" fill="#3a3028"/>
<path d="M29 65L40 42L60 32L77 36L86 50L99 62L103 80L100 98L90 108L70 108L50 96L36 88Z" fill="#5d5858"/>
<path d="M40 70L60 52L80 54L92 70L88 96L70 104L52 92Z" fill="#555052"/>
<path d="M64 82L81 69L91 73L89 85L73 93Z" fill="#ddd6b8"/>
<path d="M4 78L36 76L50 98L66 112L62 120L30 120L4 100Z" fill="#6c8c3c"/>
<path d="M0 84L20 95L34 120L0 120Z" fill="#3c4258"/>
<path d="M104 58L120 54V120L84 120L100 104Z" fill="#3a4664"/>
<path d="M50 112L80 106L92 120L46 120Z" fill="#b39670"/>
</svg></div>
<svg class="a" style="left:898px;top:208px" width="16" height="6" viewBox="0 0 16 6"><rect x="1" y="1" width="4" height="4" fill="#606266"/><rect x="10" y="1" width="4" height="4" fill="#606266"/></svg>
<div class="td" style="left:1070px;width:160px;top:80px;height:167px;line-height:167px">1</div>
<div class="tag" style="left:1278px;top:139px;width:64px;background:#fcf0f0;border-color:#f9e3e2;color:#e47470">否</div>
<div class="tag" style="left:1415px;top:139px;width:110px;background:#fcf6ed;border-color:#f8ecda;color:#dca550">未审核</div>
<div class="tag" style="left:1587px;top:139px;width:87px;background:#eef5fe;border-color:#ddebfd;color:#5a9cf8">图文</div>
<div class="td" style="left:1710px;width:160px;top:80px;height:167px;line-height:167px">5</div>
<div class="td" style="left:1870px;width:160px;top:80px;height:167px;line-height:167px">0</div>
<div class="td" style="left:2030px;width:160px;top:80px;height:167px;line-height:167px">0</div>
<div class="td" style="left:2190px;width:160px;top:80px;height:167px;line-height:167px">0</div>
<div class="td" style="left:2350px;width:360px;top:80px;height:167px;line-height:167px">2024-06-28 17:54:31</div>
<div class="td" style="left:2710px;width:360px;top:80px;height:167px;line-height:167px">2024-07-01 00:00:00</div>
<div class="rline" style="top:412px;width:3348px"></div>
<div class="cb" style="left:41px;top:316px"></div>
<div class="td" style="left:110px;width:160px;top:247px;height:167px;line-height:167px">171</div>
<div class="td" style="left:270px;width:160px;top:247px;height:167px;line-height:167px">壁纸</div>
<div class="td" style="left:430px;width:160px;top:247px;height:167px;line-height:167px">壁纸</div>
<div class="td" style="left:590px;width:160px;top:247px;height:167px;line-height:167px">壁纸</div>
<div class="a" style="left:774px;top:263px;width:120px;height:120px;border-radius:8px;overflow:hidden"><svg width="120" height="120" viewBox="0 0 120 120">
<rect width="120" height="120" fill="#c6caca"/>
<rect x="0" y="0" width="42" height="72" fill="#30343a"/>
<rect x="12" y="0" width="22" height="34" fill="#c4ccd8"/>
<rect x="8" y="42" width="30" height="26" fill="#c8d0da"/>
<rect x="42" y="0" width="6" height="72" fill="#d8dadc"/>
<rect x="48" y="0" width="13" height="30" fill="#2a3c52"/>
<rect x="44" y="30" width="38" height="26" fill="#2c3038"/>
<rect x="18" y="50" width="18" height="22" fill="#7a6cb0"/>
<rect x="46" y="58" width="28" height="20" fill="#c6ae86"/>
<path d="M74 56L112 46V78L74 88Z" fill="#3c4252"/>
<path d="M0 78L60 74L120 68V110L50 120L0 100Z" fill="#2c2c30"/>
<path d="M8 80L60 76L72 92L50 100L12 92Z" fill="#46464c"/>
<rect x="24" y="74" width="30" height="10" fill="#1e1e22"/>
<path d="M88 90L112 80L116 92L94 102Z" fill="#c4a2a2"/>
<rect x="0" y="100" width="44" height="20" fill="#d4d4d4"/>
<path d="M14 104L40 100L44 120H14Z" fill="#8c7c62"/>
</svg></div>
<svg class="a" style="left:898px;top:375px" width="16" height="6" viewBox="0 0 16 6"><rect x="1" y="1" width="4" height="4" fill="#606266"/><rect x="10" y="1" width="4" height="4" fill="#606266"/></svg>
<div class="td" style="left:1070px;width:160px;top:247px;height:167px;line-height:167px">1</div>
<div class="tag" style="left:1278px;top:306px;width:64px;background:#fcf0f0;border-color:#f9e3e2;color:#e47470">否</div>
<div class="tag" style="left:1415px;top:306px;width:110px;background:#f2f9ec;border-color:#e4f2da;color:#7ec050">已通过</div>
<div class="tag" style="left:1587px;top:306px;width:87px;background:#eef5fe;border-color:#ddebfd;color:#5a9cf8">图文</div>
<div class="td" style="left:1710px;width:160px;top:247px;height:167px;line-height:167px">2</div>
<div class="td" style="left:1870px;width:160px;top:247px;height:167px;line-height:167px">0</div>
<div class="td" style="left:2030px;width:160px;top:247px;height:167px;line-height:167px">0</div>
<div class="td" style="left:2190px;width:160px;top:247px;height:167px;line-height:167px">0</div>
<div class="td" style="left:2350px;width:360px;top:247px;height:167px;line-height:167px">2024-06-29 10:51:29</div>
<div class="td" style="left:2710px;width:360px;top:247px;height:167px;line-height:167px">2024-06-29 10:51:29</div>
<div class="rline" style="top:579px;width:3348px"></div>
<div class="cb" style="left:41px;top:483px"></div>
<div class="td" style="left:110px;width:160px;top:414px;height:167px;line-height:167px">172</div>
<div class="td" style="left:270px;width:160px;top:414px;height:167px;line-height:167px">壁纸</div>
<div class="td" style="left:430px;width:160px;top:414px;height:167px;line-height:167px">壁纸</div>
<div class="td" style="left:590px;width:160px;top:414px;height:167px;line-height:167px">壁纸</div>
<div class="a" style="left:774px;top:430px;width:120px;height:120px;border-radius:8px;overflow:hidden"><svg width="120" height="120" viewBox="0 0 120 120">
<rect width="120" height="120" fill="#7c817d"/>
<rect x="0" y="0" width="16" height="90" fill="#737874"/>
<path d="M100 0H120V18H98Z" fill="#86827c"/>
<path d="M22 52L80 50L82 90L18 92Z" fill="#1a1820"/>
<rect x="28" y="56" width="48" height="30" fill="#2e3046"/>
<g fill="#d05050"><rect x="30" y="58" width="4" height="4"/><rect x="56" y="64" width="4" height="4"/></g>
<g fill="#50b060"><rect x="36" y="62" width="4" height="4"/><rect x="66" y="66" width="4" height="4"/></g>
<g fill="#5090d0"><rect x="44" y="58" width="4" height="4"/><rect x="60" y="74" width="4" height="4"/></g>
<path d="M0 84H120V120H0Z" fill="#9a5c32"/>
<path d="M2 92L84 90L86 108L2 108Z" fill="#222226"/>
<rect x="0" y="108" width="120" height="12" fill="#a86a3a"/>
<rect x="102" y="76" width="18" height="20" fill="#e6e2d6"/>
<rect x="84" y="96" width="36" height="16" fill="#1e2026"/>
</svg></div>
<svg class="a" style="left:898px;top:542px" width="16" height="6" viewBox="0 0 16 6"><rect x="1" y="1" width="4" height="4" fill="#606266"/><rect x="10" y="1" width="4" height="4" fill="#606266"/></svg>
<div class="td" style="left:1070px;width:160px;top:414px;height:167px;line-height:167px">1</div>
<div class="tag" style="left:1278px;top:473px;width:64px;background:#fcf0f0;border-color:#f9e3e2;color:#e47470">否</div>
<div class="tag" style="left:1415px;top:473px;width:110px;background:#f2f9ec;border-color:#e4f2da;color:#7ec050">已通过</div>
<div class="tag" style="left:1587px;top:473px;width:87px;background:#eef5fe;border-color:#ddebfd;color:#5a9cf8">图文</div>
<div class="td" style="left:1710px;width:160px;top:414px;height:167px;line-height:167px">2</div>
<div class="td" style="left:1870px;width:160px;top:414px;height:167px;line-height:167px">0</div>
<div class="td" style="left:2030px;width:160px;top:414px;height:167px;line-height:167px">0</div>
<div class="td" style="left:2190px;width:160px;top:414px;height:167px;line-height:167px">0</div>
<div class="td" style="left:2350px;width:360px;top:414px;height:167px;line-height:167px">2024-06-29 10:51:48</div>
<div class="td" style="left:2710px;width:360px;top:414px;height:167px;line-height:167px">2024-06-29 10:51:48</div>
<div class="rline" style="top:746px;width:3348px"></div>
<div class="cb" style="left:41px;top:650px"></div>
<div class="td" style="left:110px;width:160px;top:581px;height:167px;line-height:167px">173</div>
<div class="td" style="left:270px;width:160px;top:581px;height:167px;line-height:167px">壁纸</div>
<div class="td" style="left:430px;width:160px;top:581px;height:167px;line-height:167px">壁纸</div>
<div class="td" style="left:590px;width:160px;top:581px;height:167px;line-height:167px">壁纸</div>
<div class="a" style="left:774px;top:597px;width:120px;height:120px;border-radius:8px;overflow:hidden"><svg width="120" height="120" viewBox="0 0 120 120">
<rect width="120" height="120" fill="#262628"/>
<path d="M0 0H120V4L0 14Z" fill="#7a6cc4"/>
<path d="M0 14L120 4V20L0 26Z" fill="#111"/>
<path d="M0 26L120 20V28L0 32Z" fill="#a6a6a6"/>
<g fill="#646466">
<path d="M2 36L118 30V38L2 44Z"/><path d="M2 47L118 41V50L2 55Z"/><path d="M2 58L118 53V62L2 66Z"/><path d="M2 69L118 65V74L2 77Z"/><path d="M2 80L118 77V87L2 88Z"/>
</g>
<path d="M0 92L120 102V120H0Z" fill="#dde0e0"/>
</svg></div>
<svg class="a" style="left:898px;top:709px" width="16" height="6" viewBox="0 0 16 6"><rect x="1" y="1" width="4" height="4" fill="#606266"/><rect x="10" y="1" width="4" height="4" fill="#606266"/></svg>
<div class="td" style="left:1070px;width:160px;top:581px;height:167px;line-height:167px">1</div>
<div class="tag" style="left:1278px;top:640px;width:64px;background:#fcf0f0;border-color:#f9e3e2;color:#e47470">否</div>
<div class="tag" style="left:1415px;top:640px;width:110px;background:#f2f9ec;border-color:#e4f2da;color:#7ec050">已通过</div>
<div class="tag" style="left:1587px;top:640px;width:87px;background:#eef5fe;border-color:#ddebfd;color:#5a9cf8">图文</div>
<div class="td" style="left:1710px;width:160px;top:581px;height:167px;line-height:167px">0</div>
<div class="td" style="left:1870px;width:160px;top:581px;height:167px;line-height:167px">0</div>
<div class="td" style="left:2030px;width:160px;top:581px;height:167px;line-height:167px">0</div>
<div class="td" style="left:2190px;width:160px;top:581px;height:167px;line-height:167px">0</div>
<div class="td" style="left:2350px;width:360px;top:581px;height:167px;line-height:167px">2024-06-29 10:52:04</div>
<div class="td" style="left:2710px;width:360px;top:581px;height:167px;line-height:167px">2024-06-29 10:52:04</div>
<div class="rline" style="top:913px;width:3348px"></div>
<div class="cb" style="left:41px;top:817px"></div>
<div class="td" style="left:110px;width:160px;top:748px;height:167px;line-height:167px">175</div>
<div class="td" style="left:270px;width:160px;top:748px;height:167px;line-height:167px">壁纸</div>
<div class="td" style="left:430px;width:160px;top:748px;height:167px;line-height:167px">壁纸</div>
<div class="td" style="left:590px;width:160px;top:748px;height:167px;line-height:167px">壁纸</div>
<div class="a" style="left:774px;top:764px;width:120px;height:120px;border-radius:8px;overflow:hidden"><svg width="120" height="120" viewBox="0 0 120 120"><defs><linearGradient id="g5" x1="0" y1="0" x2="1" y2="1"><stop offset="0" stop-color="#d8d4d6"/><stop offset="1" stop-color="#e2e6ea"/></linearGradient></defs>
<rect width="120" height="120" fill="url(#g5)"/>
<path d="M0 50L92 24L120 48L120 56L0 104Z" fill="#1c1719"/>
<path d="M0 104L120 56V61L4 109Z" fill="#4a80c8"/>
<circle cx="82" cy="46" r="10" fill="#4a5a86"/>
<path d="M76 42L82 38L86 44L80 50Z" fill="#e0b860"/>
<path d="M78 50L86 50L84 54Z" fill="#e0a0c0"/>
</svg></div>
<svg class="a" style="left:898px;top:876px" width="16" height="6" viewBox="0 0 16 6"><rect x="1" y="1" width="4" height="4" fill="#606266"/><rect x="10" y="1" width="4" height="4" fill="#606266"/></svg>
<div class="td" style="left:1070px;width:160px;top:748px;height:167px;line-height:167px">1</div>
<div class="tag" style="left:1278px;top:807px;width:64px;background:#fcf0f0;border-color:#f9e3e2;color:#e47470">否</div>
<div class="tag" style="left:1415px;top:807px;width:110px;background:#f2f9ec;border-color:#e4f2da;color:#7ec050">已通过</div>
<div class="tag" style="left:1587px;top:807px;width:87px;background:#eef5fe;border-color:#ddebfd;color:#5a9cf8">图文</div>
<div class="td" style="left:1710px;width:160px;top:748px;height:167px;line-height:167px">0</div>
<div class="td" style="left:1870px;width:160px;top:748px;height:167px;line-height:167px">0</div>
<div class="td" style="left:2030px;width:160px;top:748px;height:167px;line-height:167px">0</div>
<div class="td" style="left:2190px;width:160px;top:748px;height:167px;line-height:167px">0</div>
<div class="td" style="left:2350px;width:360px;top:748px;height:167px;line-height:167px">2024-06-29 10:52:37</div>
<div class="td" style="left:2710px;width:360px;top:748px;height:167px;line-height:167px">2024-06-29 10:52:37</div>
<div class="rline" style="top:1080px;width:3348px"></div>
<div class="cb" style="left:41px;top:984px"></div>
<div class="td" style="left:110px;width:160px;top:915px;height:167px;line-height:167px">176</div>
<div class="td" style="left:270px;width:160px;top:915px;height:167px;line-height:167px">壁纸</div>
<div class="td" style="left:430px;width:160px;top:915px;height:167px;line-height:167px">壁纸</div>
<div class="td" style="left:590px;width:160px;top:915px;height:167px;line-height:167px">壁纸</div>
<div class="a" style="left:774px;top:931px;width:120px;height:120px;border-radius:8px;overflow:hidden"><svg width="120" height="120" viewBox="0 0 120 120"><defs><linearGradient id="g6" x1="0" y1="0" x2="1" y2="0"><stop offset="0" stop-color="#8e8c8a"/><stop offset="0.5" stop-color="#7c7a78"/><stop offset="1" stop-color="#4c4c4a"/></linearGradient></defs>
<rect width="120" height="120" fill="#e2e0da"/>
<rect x="22" y="0" width="62" height="18" fill="#b6b6b0"/>
<path d="M2 24H108L120 76V106H0Z" fill="url(#g6)"/>
<circle cx="56" cy="56" r="6" fill="#2e2e2c"/>
<rect x="0" y="106" width="120" height="14" fill="#dddbd4"/>
</svg></div>
<svg class="a" style="left:898px;top:1043px" width="16" height="6" viewBox="0 0 16 6"><rect x="1" y="1" width="4" height="4" fill="#606266"/><rect x="10" y="1" width="4" height="4" fill="#606266"/></svg>
<div class="td" style="left:1070px;width:160px;top:915px;height:167px;line-height:167px">1</div>
<div class="tag" style="left:1278px;top:974px;width:64px;background:#fcf0f0;border-color:#f9e3e2;color:#e47470">否</div>
<div class="tag" style="left:1415px;top:974px;width:110px;background:#f2f9ec;border-color:#e4f2da;color:#7ec050">已通过</div>
<div class="tag" style="left:1587px;top:974px;width:87px;background:#eef5fe;border-color:#ddebfd;color:#5a9cf8">图文</div>
<div class="td" style="left:1710px;width:160px;top:915px;height:167px;line-height:167px">0</div>
<div class="td" style="left:1870px;width:160px;top:915px;height:167px;line-height:167px">0</div>
<div class="td" style="left:2030px;width:160px;top:915px;height:167px;line-height:167px">0</div>
<div class="td" style="left:2190px;width:160px;top:915px;height:167px;line-height:167px">0</div>
<div class="td" style="left:2350px;width:360px;top:915px;height:167px;line-height:167px">2024-06-29 10:52:50</div>
<div class="td" style="left:2710px;width:360px;top:915px;height:167px;line-height:167px">2024-06-29 10:52:50</div>
<div class="rline" style="top:1247px;width:3348px"></div>
<div class="cb" style="left:41px;top:1151px"></div>
<div class="td" style="left:110px;width:160px;top:1082px;height:167px;line-height:167px">177</div>
<div class="td" style="left:270px;width:160px;top:1082px;height:167px;line-height:167px">壁纸</div>
<div class="td" style="left:430px;width:160px;top:1082px;height:167px;line-height:167px">壁纸</div>
<div class="td" style="left:590px;width:160px;top:1082px;height:167px;line-height:167px">壁纸</div>
<div class="a" style="left:774px;top:1098px;width:120px;height:120px;border-radius:8px;overflow:hidden"><svg width="120" height="120" viewBox="0 0 120 120">
<rect width="120" height="120" fill="#dcdedf"/>
<rect x="48" y="12" width="14" height="62" fill="#8a8a72"/>
<rect x="108" y="8" width="12" height="80" fill="#8a8a72"/>
<rect x="66" y="22" width="50" height="36" fill="#1a1c22"/>
<path d="M0 62L48 58L52 78L0 106Z" fill="#2e3032"/>
<path d="M34 86L70 78L70 88L36 96Z" fill="#6a3a22"/>
<ellipse cx="42" cy="104" rx="13" ry="11" fill="#1c1c1e"/>
<path d="M58 66L70 64L66 76Z" fill="#8a2a2a"/>
<rect x="0" y="110" width="20" height="10" fill="#c0a070"/>
</svg></div>
<svg class="a" style="left:898px;top:1210px" width="16" height="6" viewBox="0 0 16 6"><rect x="1" y="1" width="4" height="4" fill="#606266"/><rect x="10" y="1" width="4" height="4" fill="#606266"/></svg>
<div class="td" style="left:1070px;width:160px;top:1082px;height:167px;line-height:167px">1</div>
<div class="tag" style="left:1278px;top:1141px;width:64px;background:#fcf0f0;border-color:#f9e3e2;color:#e47470">否</div>
<div class="tag" style="left:1415px;top:1141px;width:110px;background:#f2f9ec;border-color:#e4f2da;color:#7ec050">已通过</div>
<div class="tag" style="left:1587px;top:1141px;width:87px;background:#eef5fe;border-color:#ddebfd;color:#5a9cf8">图文</div>
<div class="td" style="left:1710px;width:160px;top:1082px;height:167px;line-height:167px">0</div>
<div class="td" style="left:1870px;width:160px;top:1082px;height:167px;line-height:167px">0</div>
<div class="td" style="left:2030px;width:160px;top:1082px;height:167px;line-height:167px">0</div>
<div class="td" style="left:2190px;width:160px;top:1082px;height:167px;line-height:167px">0</div>
<div class="td" style="left:2350px;width:360px;top:1082px;height:167px;line-height:167px">2024-06-29 10:53:04</div>
<div class="td" style="left:2710px;width:360px;top:1082px;height:167px;line-height:167px">2024-06-29 10:53:04</div>
<div class="rline" style="top:1414px;width:3348px"></div>
<div class="cb" style="left:41px;top:1318px"></div>
<div class="td" style="left:110px;width:160px;top:1249px;height:167px;line-height:167px">178</div>
<div class="td" style="left:270px;width:160px;top:1249px;height:167px;line-height:167px">壁纸</div>
<div class="td" style="left:430px;width:160px;top:1249px;height:167px;line-height:167px">壁纸</div>
<div class="td" style="left:590px;width:160px;top:1249px;height:167px;line-height:167px">壁纸</div>
<div class="a" style="left:774px;top:1265px;width:120px;height:120px;border-radius:8px;overflow:hidden"><svg width="120" height="120" viewBox="0 0 120 120"><defs><linearGradient id="g8" x1="0" y1="0" x2="0" y2="1"><stop offset="0" stop-color="#4a62b6"/><stop offset="0.6" stop-color="#7088cc"/></linearGradient></defs>
<rect width="120" height="120" fill="url(#g8)"/>
<path d="M0 42L22 36L40 52L50 64L0 66Z" fill="#e6e8f0"/>
<path d="M0 64L50 62L120 74V80H0Z" fill="#6c84c0"/>
<path d="M0 72L40 66L80 70L120 72V106H0Z" fill="#d6a6c6"/>
<rect x="0" y="98" width="120" height="8" fill="#585070"/>
<rect x="0" y="106" width="120" height="14" fill="#e6c6c6"/>
<rect x="18" y="110" width="84" height="8" fill="#d0c8dc"/>
<rect x="42" y="13" width="37" height="69" rx="2" fill="#eeeeee"/>
<rect x="51" y="25" width="17" height="12" fill="#4a8ad8"/>
<g fill="#555"><rect x="50" y="45" width="20" height="2"/><rect x="48" y="52" width="26" height="1.5"/><rect x="48" y="57" width="26" height="1.5"/><rect x="54" y="68" width="12" height="2"/></g>
</svg></div>
<svg class="a" style="left:898px;top:1377px" width="16" height="6" viewBox="0 0 16 6"><rect x="1" y="1" width="4" height="4" fill="#606266"/><rect x="10" y="1" width="4" height="4" fill="#606266"/></svg>
<div class="td" style="left:1070px;width:160px;top:1249px;height:167px;line-height:167px">1</div>
<div class="tag" style="left:1278px;top:1308px;width:64px;background:#fcf0f0;border-color:#f9e3e2;color:#e47470">否</div>
<div class="tag" style="left:1415px;top:1308px;width:110px;background:#f2f9ec;border-color:#e4f2da;color:#7ec050">已通过</div>
<div class="tag" style="left:1587px;top:1308px;width:87px;background:#eef5fe;border-color:#ddebfd;color:#5a9cf8">图文</div>
<div class="td" style="left:1710px;width:160px;top:1249px;height:167px;line-height:167px">0</div>
<div class="td" style="left:1870px;width:160px;top:1249px;height:167px;line-height:167px">0</div>
<div class="td" style="left:2030px;width:160px;top:1249px;height:167px;line-height:167px">0</div>
<div class="td" style="left:2190px;width:160px;top:1249px;height:167px;line-height:167px">0</div>
<div class="td" style="left:2350px;width:360px;top:1249px;height:167px;line-height:167px">2024-06-29 10:53:20</div>
<div class="td" style="left:2710px;width:360px;top:1249px;height:167px;line-height:167px">2024-06-29 10:53:20</div>
<div class="rline" style="top:1581px;width:3348px"></div>
<div class="cb" style="left:41px;top:1485px"></div>
<div class="td" style="left:110px;width:160px;top:1416px;height:167px;line-height:167px">179</div>
<div class="td" style="left:270px;width:160px;top:1416px;height:167px;line-height:167px">壁纸</div>
<div class="td" style="left:430px;width:160px;top:1416px;height:167px;line-height:167px">壁纸</div>
<div class="td" style="left:590px;width:160px;top:1416px;height:167px;line-height:167px">壁纸</div>
<div class="a" style="left:774px;top:1432px;width:120px;height:120px;border-radius:8px;overflow:hidden"><svg width="120" height="120" viewBox="0 0 120 120">
<rect width="120" height="120" fill="#aaa8a0"/>
<path d="M40 0H84L88 6L30 48L24 40Z" fill="#3c3c3a"/>
<path d="M0 20L20 16L26 26L0 46Z" fill="#5c5c5a"/>
<rect x="98" y="16" width="20" height="26" fill="#8c8c8a"/>
<path d="M0 48L50 40L120 60V120H0Z" fill="#b8bcc0"/>
<rect x="12" y="56" width="108" height="10" fill="#d0d4d8"/>
<rect x="40" y="60" width="80" height="8" fill="#506070"/>
</svg></div>
<svg class="a" style="left:898px;top:1544px" width="16" height="6" viewBox="0 0 16 6"><rect x="1" y="1" width="4" height="4" fill="#606266"/><rect x="10" y="1" width="4" height="4" fill="#606266"/></svg>
<div class="td" style="left:1070px;width:160px;top:1416px;height:167px;line-height:167px">1</div>
<div class="tag" style="left:1278px;top:1475px;width:64px;background:#fcf0f0;border-color:#f9e3e2;color:#e47470">否</div>
<div class="tag" style="left:1415px;top:1475px;width:110px;background:#f2f9ec;border-color:#e4f2da;color:#7ec050">已通过</div>
<div class="tag" style="left:1587px;top:1475px;width:87px;background:#eef5fe;border-color:#ddebfd;color:#5a9cf8">图文</div>
<div class="td" style="left:1710px;width:160px;top:1416px;height:167px;line-height:167px">0</div>
<div class="td" style="left:1870px;width:160px;top:1416px;height:167px;line-height:167px">0</div>
<div class="td" style="left:2030px;width:160px;top:1416px;height:167px;line-height:167px">0</div>
<div class="td" style="left:2190px;width:160px;top:1416px;height:167px;line-height:167px">0</div>
<div class="td" style="left:2350px;width:360px;top:1416px;height:167px;line-height:167px">2024-06-29 10:53:32</div>
<div class="td" style="left:2710px;width:360px;top:1416px;height:167px;line-height:167px">2024-06-29 10:53:32</div>
<div class="a" style="left:2948px;top:0;width:400px;height:2000px;background:#fff;box-shadow:0 0 20px rgba(0,0,0,.12)">
<div class="a" style="left:0;top:0;width:400px;height:80px;background:#f8f8f9"></div><div class="rline" style="top:78px;width:400px"></div>
<div class="th" style="left:0;width:400px">操作</div>
<div class="rline" style="top:245px;width:400px"></div>
<div class="a" style="left:116px;top:139px;width:72px;height:48px;border-radius:6px;background:#5a9cf8"><svg class="a" style="left:24px;top:12px" width="24" height="24" viewBox="0 0 24 24"><path d="M11 4H3V21H20V13" stroke="#fff" stroke-width="1.8" fill="none"/><path d="M8.5 15L9.5 11L19 1.5L22 4.5L12.5 14Z" stroke="#fff" stroke-width="1.8" fill="none"/></svg></div>
<div class="a" style="left:212px;top:139px;width:72px;height:48px;border-radius:6px;background:#e47470"><svg class="a" style="left:23px;top:11px" width="26" height="26" viewBox="0 0 26 26"><path d="M2 5.5H24M9 5.5V2H17V5.5M5 5.5V24H21V5.5M10.5 10V20M15.5 10V20" stroke="#fff" stroke-width="1.8" fill="none"/></svg></div>
<div class="rline" style="top:412px;width:400px"></div>
<div class="a" style="left:116px;top:306px;width:72px;height:48px;border-radius:6px;background:#5a9cf8"><svg class="a" style="left:24px;top:12px" width="24" height="24" viewBox="0 0 24 24"><path d="M11 4H3V21H20V13" stroke="#fff" stroke-width="1.8" fill="none"/><path d="M8.5 15L9.5 11L19 1.5L22 4.5L12.5 14Z" stroke="#fff" stroke-width="1.8" fill="none"/></svg></div>
<div class="a" style="left:212px;top:306px;width:72px;height:48px;border-radius:6px;background:#e47470"><svg class="a" style="left:23px;top:11px" width="26" height="26" viewBox="0 0 26 26"><path d="M2 5.5H24M9 5.5V2H17V5.5M5 5.5V24H21V5.5M10.5 10V20M15.5 10V20" stroke="#fff" stroke-width="1.8" fill="none"/></svg></div>
<div class="rline" style="top:579px;width:400px"></div>
<div class="a" style="left:116px;top:473px;width:72px;height:48px;border-radius:6px;background:#5a9cf8"><svg class="a" style="left:24px;top:12px" width="24" height="24" viewBox="0 0 24 24"><path d="M11 4H3V21H20V13" stroke="#fff" stroke-width="1.8" fill="none"/><path d="M8.5 15L9.5 11L19 1.5L22 4.5L12.5 14Z" stroke="#fff" stroke-width="1.8" fill="none"/></svg></div>
<div class="a" style="left:212px;top:473px;width:72px;height:48px;border-radius:6px;background:#e47470"><svg class="a" style="left:23px;top:11px" width="26" height="26" viewBox="0 0 26 26"><path d="M2 5.5H24M9 5.5V2H17V5.5M5 5.5V24H21V5.5M10.5 10V20M15.5 10V20" stroke="#fff" stroke-width="1.8" fill="none"/></svg></div>
<div class="rline" style="top:746px;width:400px"></div>
<div class="a" style="left:116px;top:640px;width:72px;height:48px;border-radius:6px;background:#5a9cf8"><svg class="a" style="left:24px;top:12px" width="24" height="24" viewBox="0 0 24 24"><path d="M11 4H3V21H20V13" stroke="#fff" stroke-width="1.8" fill="none"/><path d="M8.5 15L9.5 11L19 1.5L22 4.5L12.5 14Z" stroke="#fff" stroke-width="1.8" fill="none"/></svg></div>
<div class="a" style="left:212px;top:640px;width:72px;height:48px;border-radius:6px;background:#e47470"><svg class="a" style="left:23px;top:11px" width="26" height="26" viewBox="0 0 26 26"><path d="M2 5.5H24M9 5.5V2H17V5.5M5 5.5V24H21V5.5M10.5 10V20M15.5 10V20" stroke="#fff" stroke-width="1.8" fill="none"/></svg></div>
<div class="rline" style="top:913px;width:400px"></div>
<div class="a" style="left:116px;top:807px;width:72px;height:48px;border-radius:6px;background:#5a9cf8"><svg class="a" style="left:24px;top:12px" width="24" height="24" viewBox="0 0 24 24"><path d="M11 4H3V21H20V13" stroke="#fff" stroke-width="1.8" fill="none"/><path d="M8.5 15L9.5 11L19 1.5L22 4.5L12.5 14Z" stroke="#fff" stroke-width="1.8" fill="none"/></svg></div>
<div class="a" style="left:212px;top:807px;width:72px;height:48px;border-radius:6px;background:#e47470"><svg class="a" style="left:23px;top:11px" width="26" height="26" viewBox="0 0 26 26"><path d="M2 5.5H24M9 5.5V2H17V5.5M5 5.5V24H21V5.5M10.5 10V20M15.5 10V20" stroke="#fff" stroke-width="1.8" fill="none"/></svg></div>
<div class="rline" style="top:1080px;width:400px"></div>
<div class="a" style="left:116px;top:974px;width:72px;height:48px;border-radius:6px;background:#5a9cf8"><svg class="a" style="left:24px;top:12px" width="24" height="24" viewBox="0 0 24 24"><path d="M11 4H3V21H20V13" stroke="#fff" stroke-width="1.8" fill="none"/><path d="M8.5 15L9.5 11L19 1.5L22 4.5L12.5 14Z" stroke="#fff" stroke-width="1.8" fill="none"/></svg></div>
<div class="a" style="left:212px;top:974px;width:72px;height:48px;border-radius:6px;background:#e47470"><svg class="a" style="left:23px;top:11px" width="26" height="26" viewBox="0 0 26 26"><path d="M2 5.5H24M9 5.5V2H17V5.5M5 5.5V24H21V5.5M10.5 10V20M15.5 10V20" stroke="#fff" stroke-width="1.8" fill="none"/></svg></div>
<div class="rline" style="top:1247px;width:400px"></div>
<div class="a" style="left:116px;top:1141px;width:72px;height:48px;border-radius:6px;background:#5a9cf8"><svg class="a" style="left:24px;top:12px" width="24" height="24" viewBox="0 0 24 24"><path d="M11 4H3V21H20V13" stroke="#fff" stroke-width="1.8" fill="none"/><path d="M8.5 15L9.5 11L19 1.5L22 4.5L12.5 14Z" stroke="#fff" stroke-width="1.8" fill="none"/></svg></div>
<div class="a" style="left:212px;top:1141px;width:72px;height:48px;border-radius:6px;background:#e47470"><svg class="a" style="left:23px;top:11px" width="26" height="26" viewBox="0 0 26 26"><path d="M2 5.5H24M9 5.5V2H17V5.5M5 5.5V24H21V5.5M10.5 10V20M15.5 10V20" stroke="#fff" stroke-width="1.8" fill="none"/></svg></div>
<div class="rline" style="top:1414px;width:400px"></div>
<div class="a" style="left:116px;top:1308px;width:72px;height:48px;border-radius:6px;background:#5a9cf8"><svg class="a" style="left:24px;top:12px" width="24" height="24" viewBox="0 0 24 24"><path d="M11 4H3V21H20V13" stroke="#fff" stroke-width="1.8" fill="none"/><path d="M8.5 15L9.5 11L19 1.5L22 4.5L12.5 14Z" stroke="#fff" stroke-width="1.8" fill="none"/></svg></div>
<div class="a" style="left:212px;top:1308px;width:72px;height:48px;border-radius:6px;background:#e47470"><svg class="a" style="left:23px;top:11px" width="26" height="26" viewBox="0 0 26 26"><path d="M2 5.5H24M9 5.5V2H17V5.5M5 5.5V24H21V5.5M10.5 10V20M15.5 10V20" stroke="#fff" stroke-width="1.8" fill="none"/></svg></div>
<div class="rline" style="top:1581px;width:400px"></div>
<div class="a" style="left:116px;top:1475px;width:72px;height:48px;border-radius:6px;background:#5a9cf8"><svg class="a" style="left:24px;top:12px" width="24" height="24" viewBox="0 0 24 24"><path d="M11 4H3V21H20V13" stroke="#fff" stroke-width="1.8" fill="none"/><path d="M8.5 15L9.5 11L19 1.5L22 4.5L12.5 14Z" stroke="#fff" stroke-width="1.8" fill="none"/></svg></div>
<div class="a" style="left:212px;top:1475px;width:72px;height:48px;border-radius:6px;background:#e47470"><svg class="a" style="left:23px;top:11px" width="26" height="26" viewBox="0 0 26 26"><path d="M2 5.5H24M9 5.5V2H17V5.5M5 5.5V24H21V5.5M10.5 10V20M15.5 10V20" stroke="#fff" stroke-width="1.8" fill="none"/></svg></div>
</div>
</div>
</div>
<div class="a" style="left:3828px;top:242px;width:12px;height:1918px;background:#f0f0f0"></div><div class="a" style="left:3828px;top:243px;width:12px;height:1570px;background:#c1c1c1;border-radius:6px"></div>
<div class="a" style="left:400px;top:242px;width:16px;height:1918px;background:linear-gradient(90deg,rgba(0,21,41,.22),rgba(0,21,41,0))"></div>
<div class="a" style="left:0;top:2118px;width:276px;height:42px;background:#1e1f1f;border:1px solid #3c3c3c;border-left:none;border-bottom:none;border-radius:0 8px 0 0"></div>
<div class="a" style="left:10px;top:2122px;font-size:25.5px;line-height:36px;color:#d6d6d6;white-space:nowrap">localhost:81/note/note</div>
</body></html>
